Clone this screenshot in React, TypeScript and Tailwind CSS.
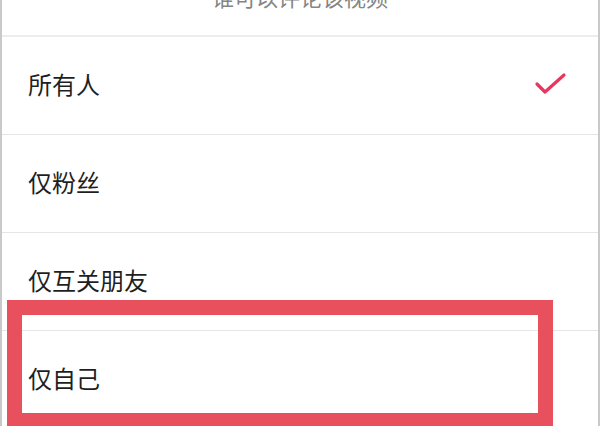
import React from "react";

const options = ["所有人", "仅粉丝", "仅互关朋友", "仅自己"];

const Check = () => (
  <svg width="34" height="26" viewBox="0 0 34 26" fill="none">
    <path d="M3 13 L11 21 L30 4" stroke="#e8365d" strokeWidth="3.2" strokeLinecap="round" strokeLinejoin="round" />
  </svg>
);

export default function App() {
  return (
    <div
      className="relative h-[426px] w-[600px] overflow-hidden bg-white border-x-2 border-[#c9c9c9]"
      style={{ fontFamily: '"Noto Sans CJK SC", "Noto Sans", sans-serif' }}
    >
      <div className="flex h-[37px] justify-center overflow-hidden border-b-2 border-[#ececec]">
        <span className="mt-[-15px] text-[22px] leading-[22px] text-[#858585]">谁可以评论该视频</span>
      </div>

      {options.map((label, i) => (
        <div
          key={label}
          className="flex h-[98px] items-center justify-between border-b border-[#e6e6e6] pb-[4px] pl-[26px] pr-[30px]"
        >
          <span className="text-[24px] leading-none text-[#1f1f1f]">{label}</span>
          {i === 0 && <Check />}
        </div>
      ))}

      {/* annotation box */}
      <div className="absolute left-[5px] top-[300px] h-[128px] w-[546px] border-[15px] border-[#e8505e]" />
    </div>
  );
}
